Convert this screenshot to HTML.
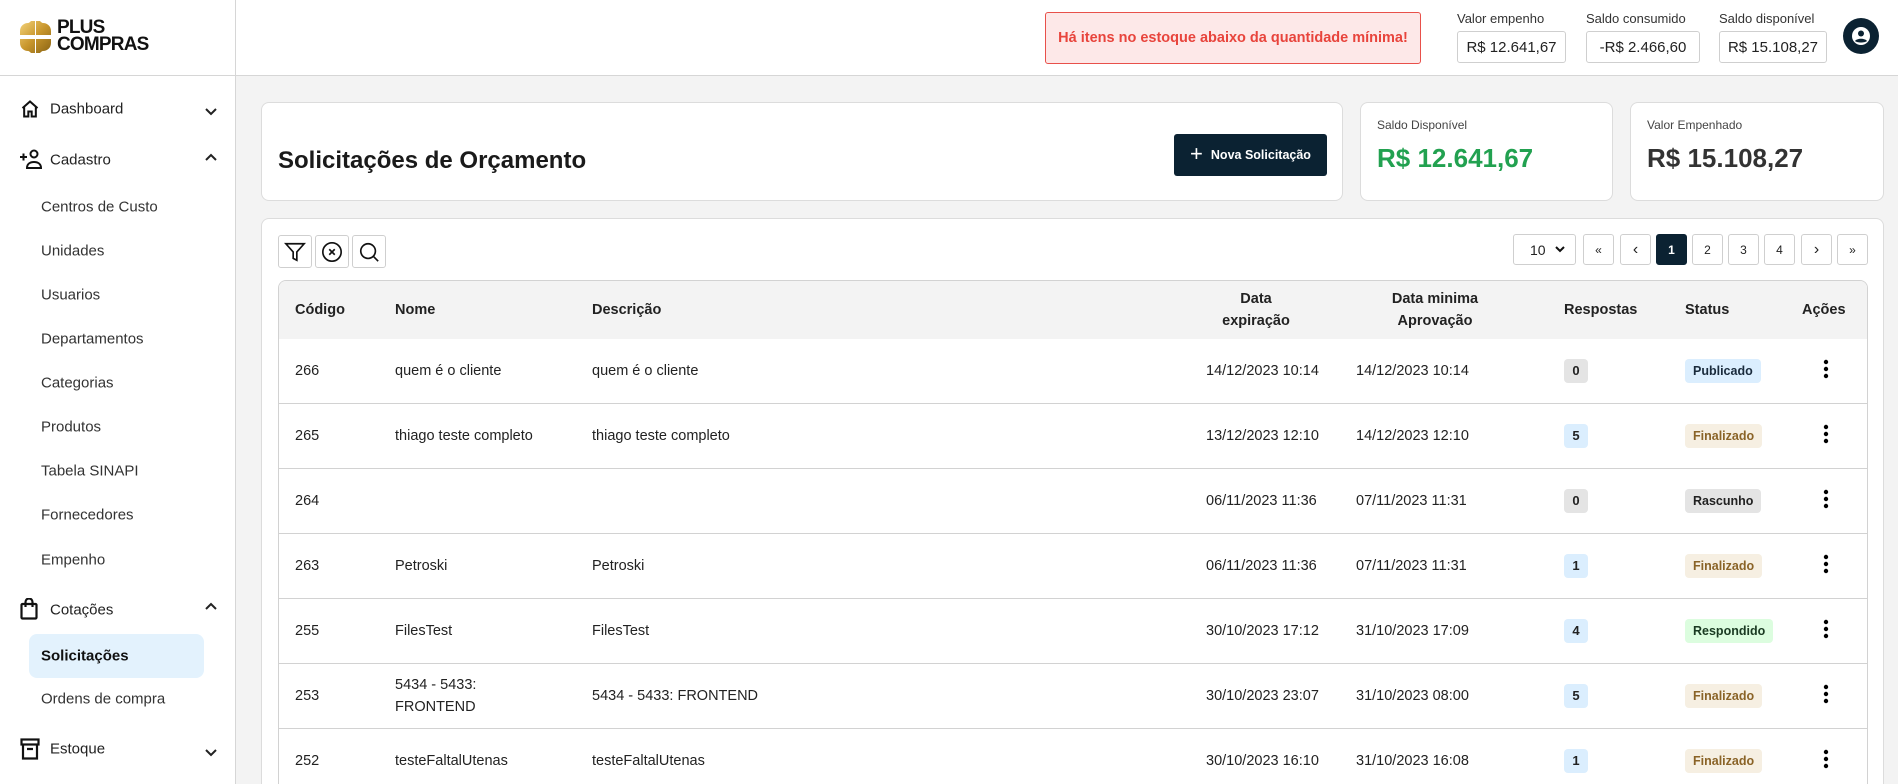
<!DOCTYPE html>
<html style="width:1898px;height:784px;overflow:hidden"><head><meta charset="utf-8"><style>
*{box-sizing:border-box;margin:0;padding:0}
body{width:1898px;height:784px;overflow:hidden;background:#f3f3f3;font-family:"Liberation Sans",sans-serif;color:#222}
#wrap{position:relative;width:1898px;height:784px;overflow:hidden}
.abs{position:absolute}
#side{left:0;top:0;width:236px;height:784px;background:#fff;border-right:1px solid #d6d6d6}
#logo{left:0;top:0;width:236px;height:76px;border-bottom:1px solid #d6d6d6}
#top{left:236px;top:0;width:1662px;height:76px;background:#fff;border-bottom:1px solid #d6d6d6}
.nav{position:absolute;left:50px;font-size:15px;color:#222;transform:translateY(-50%)}
.sub{position:absolute;left:41px;font-size:15px;color:#333;transform:translateY(-50%)}
.chev{position:absolute;left:205px;transform:translateY(-50%)}
.ico{position:absolute;left:20px;transform:translateY(-50%)}
.card{position:absolute;background:#fff;border:1px solid #dcdcdc;border-radius:8px}
.vbox{position:absolute;top:31px;height:32px;border:1px solid #cfcfcf;border-radius:3px;font-size:15px;display:flex;align-items:center;justify-content:center;color:#222}
.vlbl{position:absolute;top:11px;font-size:13px;color:#333}
.pg{position:absolute;top:234px;width:31px;height:31px;border:1px solid #cfcfcf;border-radius:3px;font-size:12px;display:flex;align-items:center;justify-content:center;color:#222;background:#fff}
.tb{position:absolute;top:235px;width:34px;height:33px;border:1px solid #cfcfcf;border-radius:3px;display:flex;align-items:center;justify-content:center;background:#fff}
.row{position:absolute;left:279px;width:1588px;height:65px;border-bottom:1px solid #d2d2d2;background:#fff;font-size:14.5px;color:#222}
.row>div{position:absolute;top:50%;transform:translateY(-50%)}
.c1{left:16px}.c2{left:116px;width:140px;line-height:22px}.c3{left:313px}.c4{left:927px}.c5{left:1077px}
.c6{left:1285px}.c7{left:1406px}.c8{left:1544px}
.bn{display:inline-block;min-width:24px;height:24px;line-height:24px;text-align:center;border-radius:4px;font-size:13px;font-weight:bold;padding:0 7px}
.st{display:inline-block;height:24px;line-height:24px;border-radius:4px;font-size:12.5px;font-weight:bold;padding:0 8px}
.th{position:absolute;font-size:14.5px;font-weight:bold;color:#222;text-align:center;line-height:22px;transform:translateY(-50%);top:29px}
</style></head><body><div id="wrap">
<div class="card" style="left:261px;top:218px;width:1623px;height:566px;border-bottom:none;border-radius:8px 8px 0 0"></div>
<div class="abs" style="left:278px;top:280px;width:1590px;height:504px;border:1px solid #d2d2d2;border-bottom:none;border-radius:8px 8px 0 0;overflow:hidden;background:#fff">
 <div class="abs" style="left:0;top:0;width:100%;height:58px;background:#f3f3f3"></div>
 <div class="th" style="left:16px">Código</div>
 <div class="th" style="left:116px">Nome</div>
 <div class="th" style="left:313px">Descrição</div>
 <div class="th" style="left:937px;width:80px">Data<br>expiração</div>
 <div class="th" style="left:1096px;width:120px">Data minima<br>Aprovação</div>
 <div class="th" style="left:1285px">Respostas</div>
 <div class="th" style="left:1406px">Status</div>
 <div class="th" style="left:1523px">Ações</div>
</div>
<div id="side" class="abs">
 <div id="logo" class="abs">
  <svg class="abs" style="left:20px;top:21px" width="31" height="32" viewBox="0 0 31 32"><defs><linearGradient id="g" x1="0" y1="0" x2="1" y2="1"><stop offset="0" stop-color="#f3d27a"/><stop offset=".5" stop-color="#c8962c"/><stop offset="1" stop-color="#8a6414"/></linearGradient></defs>
  <path d="M11 0h4v14H0v-4C0 5 4 2 8 2c1 0 2-1 3-2zM16 0h4c1 1 2 2 3 2 4 0 8 3 8 8v4H16zM0 18h15v14h-4c-1-1-2-2-3-2-4 0-8-3-8-8zM16 18h15v4c0 5-4 8-8 8-1 0-2 1-3 2h-4z" fill="url(#g)"/></svg>
  <div class="abs" style="left:57px;top:19px;font-weight:bold;font-size:19px;line-height:17px;letter-spacing:-0.8px;color:#111">PLUS<br>COMPRAS</div>
 </div>
 <svg class="ico" style="top:109px" width="20" height="20" viewBox="0 0 24 24" fill="none" stroke="#111" stroke-width="2.4"><path d="M3 11L12 3l9 8M5 9v12h5v-6h4v6h5V9"/></svg>
 <div class="nav" style="top:109px">Dashboard</div>
 <svg class="chev" style="top:112px" width="12" height="8" viewBox="0 0 12 8"><path d="M1 1l5 5 5-5" fill="none" stroke="#222" stroke-width="2"/></svg>
 <svg class="ico" style="top:159px" width="24" height="20" viewBox="0 0 24 20" fill="none" stroke="#111" stroke-width="2"><path d="M0 8h7M3.5 4.5v7"/><circle cx="14" cy="5" r="3.5"/><path d="M7 19c0-4 3-6 7-6s7 2 7 6z"/></svg>
 <div class="nav" style="top:160px">Cadastro</div>
 <svg class="chev" style="top:157px" width="12" height="8" viewBox="0 0 12 8"><path d="M1 7l5-5 5 5" fill="none" stroke="#222" stroke-width="2"/></svg>
 <div class="sub" style="top:207px">Centros de Custo</div>
 <div class="sub" style="top:251px">Unidades</div>
 <div class="sub" style="top:295px">Usuarios</div>
 <div class="sub" style="top:339px">Departamentos</div>
 <div class="sub" style="top:383px">Categorias</div>
 <div class="sub" style="top:427px">Produtos</div>
 <div class="sub" style="top:471px">Tabela SINAPI</div>
 <div class="sub" style="top:515px">Fornecedores</div>
 <div class="sub" style="top:560px">Empenho</div>
 <svg class="ico" style="top:609px" width="18" height="22" viewBox="0 0 18 22" fill="none" stroke="#111" stroke-width="2.2"><rect x="1.5" y="6" width="15" height="14.5" rx="1"/><path d="M5.5 9V4a3.5 3.5 0 0 1 7 0v5"/></svg>
 <div class="nav" style="top:610px">Cotações</div>
 <svg class="chev" style="top:606px" width="12" height="8" viewBox="0 0 12 8"><path d="M1 7l5-5 5 5" fill="none" stroke="#222" stroke-width="2"/></svg>
 <div class="abs" style="left:29px;top:634px;width:175px;height:44px;background:#e3f2fd;border-radius:8px"></div>
 <div class="sub" style="top:656px;font-weight:bold;color:#111">Solicitações</div>
 <div class="sub" style="top:699px">Ordens de compra</div>
 <svg class="ico" style="top:749px" width="20" height="22" viewBox="0 0 20 22" fill="none" stroke="#111" stroke-width="2.2"><rect x="1.5" y="1.5" width="17" height="5"/><path d="M3 6.5v14h14v-14M7 11h6"/></svg>
 <div class="nav" style="top:749px">Estoque</div>
 <svg class="chev" style="top:753px" width="12" height="8" viewBox="0 0 12 8"><path d="M1 1l5 5 5-5" fill="none" stroke="#222" stroke-width="2"/></svg>
</div>
<div id="top" class="abs"></div>
<div class="abs" style="left:1045px;top:12px;width:376px;height:52px;background:#fde8e8;border:1px solid #e8504a;border-radius:3px;color:#e8443c;font-weight:bold;font-size:14.5px;display:flex;align-items:center;justify-content:center">Há itens no estoque abaixo da quantidade mínima!</div>
<div class="vlbl" style="left:1457px">Valor empenho</div>
<div class="vbox" style="left:1457px;width:109px">R$ 12.641,67</div>
<div class="vlbl" style="left:1586px">Saldo consumido</div>
<div class="vbox" style="left:1586px;width:114px">-R$ 2.466,60</div>
<div class="vlbl" style="left:1719px">Saldo disponível</div>
<div class="vbox" style="left:1719px;width:108px">R$ 15.108,27</div>
<svg class="abs" style="left:1843px;top:18px" width="36" height="36" viewBox="0 0 36 36"><circle cx="18" cy="18" r="18" fill="#0b2232"/><circle cx="18" cy="18" r="9" fill="#fff"/><circle cx="18" cy="15.5" r="3" fill="#0b2232"/><path d="M12 23c2-3 10-3 12 0c-2 2-10 2-12 0z" fill="#0b2232"/></svg>

<div class="card" style="left:261px;top:102px;width:1082px;height:99px"></div>
<div class="abs" style="left:278px;top:147px;font-size:24px;font-weight:bold;color:#1a1a1a">Solicitações de Orçamento</div>
<div class="abs" style="left:1174px;top:134px;width:153px;height:42px;background:#0b2232;border-radius:3px;color:#fff;font-size:12.5px;font-weight:bold;display:flex;align-items:center;justify-content:center"><span style="font-size:22px;font-weight:normal;margin-right:8px;margin-top:-3px">+</span>Nova Solicitação</div>
<div class="card" style="left:1360px;top:102px;width:253px;height:99px"></div>
<div class="abs" style="left:1377px;top:118px;font-size:12px;color:#444">Saldo Disponível</div>
<div class="abs" style="left:1377px;top:143px;font-size:26px;font-weight:bold;color:#22a150">R$ 12.641,67</div>
<div class="card" style="left:1630px;top:102px;width:254px;height:99px"></div>
<div class="abs" style="left:1647px;top:118px;font-size:12px;color:#444">Valor Empenhado</div>
<div class="abs" style="left:1647px;top:143px;font-size:26px;font-weight:bold;color:#333">R$ 15.108,27</div>

<div class="tb" style="left:278px"><svg width="22" height="22" viewBox="0 0 24 24" fill="none" stroke="#111" stroke-width="1.8"><path d="M2 3h20l-8 9v9l-4-2v-7z"/></svg></div>
<div class="tb" style="left:315px"><svg width="22" height="22" viewBox="0 0 24 24" fill="none" stroke="#111" stroke-width="1.8"><circle cx="12" cy="12" r="10"/><path d="M9 9l6 6M15 9l-6 6"/></svg></div>
<div class="tb" style="left:352px"><svg width="22" height="22" viewBox="0 0 24 24" fill="none" stroke="#111" stroke-width="1.8"><circle cx="11" cy="11" r="8"/><path d="M17 17l5 5"/></svg></div>
<div class="pg" style="left:1513px;width:63px;justify-content:flex-start;padding-left:16px;font-size:14px">10<svg style="position:absolute;right:10px" width="10" height="7" viewBox="0 0 10 7"><path d="M1 1l4 4 4-4" fill="none" stroke="#111" stroke-width="2"/></svg></div>
<div class="pg" style="left:1583px">«</div>
<div class="pg" style="left:1620px;font-size:16px">‹</div>
<div class="pg" style="left:1656px;background:#0b2232;color:#fff;border-color:#0b2232;font-weight:bold">1</div>
<div class="pg" style="left:1692px">2</div>
<div class="pg" style="left:1728px">3</div>
<div class="pg" style="left:1764px">4</div>
<div class="pg" style="left:1801px;font-size:16px">›</div>
<div class="pg" style="left:1837px">»</div>

<div class="row" style="top:339px"><div class="c1">266</div><div class="c2">quem é o cliente</div><div class="c3">quem é o cliente</div><div class="c4">14/12/2023 10:14</div><div class="c5">14/12/2023 10:14</div><div class="c6"><span class="bn" style="background:#e4e4e4">0</span></div><div class="c7"><span class="st" style="background:#dbeefe;color:#1a2b3c">Publicado</span></div><div class="c8"><svg width="6" height="20"><circle cx="3" cy="3" r="2.2"/><circle cx="3" cy="10" r="2.2"/><circle cx="3" cy="17" r="2.2"/></svg></div></div>
<div class="row" style="top:404px"><div class="c1">265</div><div class="c2" style="width:200px">thiago teste completo</div><div class="c3">thiago teste completo</div><div class="c4">13/12/2023 12:10</div><div class="c5">14/12/2023 12:10</div><div class="c6"><span class="bn" style="background:#dbeefe">5</span></div><div class="c7"><span class="st" style="background:#f6efe2;color:#8a6327">Finalizado</span></div><div class="c8"><svg width="6" height="20"><circle cx="3" cy="3" r="2.2"/><circle cx="3" cy="10" r="2.2"/><circle cx="3" cy="17" r="2.2"/></svg></div></div>
<div class="row" style="top:469px"><div class="c1">264</div><div class="c4">06/11/2023 11:36</div><div class="c5">07/11/2023 11:31</div><div class="c6"><span class="bn" style="background:#e4e4e4">0</span></div><div class="c7"><span class="st" style="background:#e4e4e4;color:#222">Rascunho</span></div><div class="c8"><svg width="6" height="20"><circle cx="3" cy="3" r="2.2"/><circle cx="3" cy="10" r="2.2"/><circle cx="3" cy="17" r="2.2"/></svg></div></div>
<div class="row" style="top:534px"><div class="c1">263</div><div class="c2">Petroski</div><div class="c3">Petroski</div><div class="c4">06/11/2023 11:36</div><div class="c5">07/11/2023 11:31</div><div class="c6"><span class="bn" style="background:#dbeefe">1</span></div><div class="c7"><span class="st" style="background:#f6efe2;color:#8a6327">Finalizado</span></div><div class="c8"><svg width="6" height="20"><circle cx="3" cy="3" r="2.2"/><circle cx="3" cy="10" r="2.2"/><circle cx="3" cy="17" r="2.2"/></svg></div></div>
<div class="row" style="top:599px"><div class="c1">255</div><div class="c2">FilesTest</div><div class="c3">FilesTest</div><div class="c4">30/10/2023 17:12</div><div class="c5">31/10/2023 17:09</div><div class="c6"><span class="bn" style="background:#dbeefe">4</span></div><div class="c7"><span class="st" style="background:#dcfddf;color:#1a3a22">Respondido</span></div><div class="c8"><svg width="6" height="20"><circle cx="3" cy="3" r="2.2"/><circle cx="3" cy="10" r="2.2"/><circle cx="3" cy="17" r="2.2"/></svg></div></div>
<div class="row" style="top:664px"><div class="c1">253</div><div class="c2">5434 - 5433:<br>FRONTEND</div><div class="c3">5434 - 5433: FRONTEND</div><div class="c4">30/10/2023 23:07</div><div class="c5">31/10/2023 08:00</div><div class="c6"><span class="bn" style="background:#dbeefe">5</span></div><div class="c7"><span class="st" style="background:#f6efe2;color:#8a6327">Finalizado</span></div><div class="c8"><svg width="6" height="20"><circle cx="3" cy="3" r="2.2"/><circle cx="3" cy="10" r="2.2"/><circle cx="3" cy="17" r="2.2"/></svg></div></div>
<div class="row" style="top:729px;height:55px;border-bottom:none"><div class="c1" style="top:32px">252</div><div class="c2" style="width:200px;top:32px">testeFaltalUtenas</div><div class="c3" style="top:32px">testeFaltalUtenas</div><div class="c4" style="top:32px">30/10/2023 16:10</div><div class="c5" style="top:32px">31/10/2023 16:08</div><div class="c6" style="top:32px"><span class="bn" style="background:#dbeefe">1</span></div><div class="c7" style="top:32px"><span class="st" style="background:#f6efe2;color:#8a6327">Finalizado</span></div><div class="c8" style="top:32px"><svg width="6" height="20"><circle cx="3" cy="3" r="2.2"/><circle cx="3" cy="10" r="2.2"/><circle cx="3" cy="17" r="2.2"/></svg></div></div>
</div></body></html>
